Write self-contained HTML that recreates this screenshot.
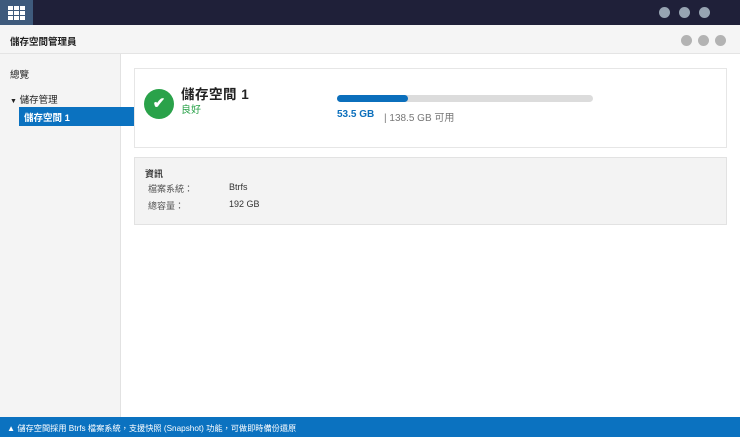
<!DOCTYPE html>
<html><head><meta charset="utf-8"><style>
*{margin:0;padding:0;box-sizing:border-box}
body{width:740px;height:437px;overflow:hidden;position:relative;background:#fff;font-family:"Liberation Sans","Noto Sans CJK TC",sans-serif;color:#222}
.top{position:absolute;left:0;top:0;width:740px;height:25px;background:#1f2039}
.apps{position:absolute;left:0;top:0;width:33px;height:25px;background:#3e5a7c}
.apps i{position:absolute;width:5px;height:4px;background:#fff}
.dot{position:absolute;width:11px;height:11px;border-radius:50%}
.hdr{position:absolute;left:0;top:25px;width:740px;height:29px;background:#f5f5f5;border-bottom:1px solid #e4e4e4;font-size:9.5px;font-weight:bold;padding:9px 0 0 10px}
.side{position:absolute;left:0;top:54px;width:121px;height:363px;background:#f4f4f4;border-right:1px solid #e2e2e2;font-size:9.5px}
.main{position:absolute;left:122px;top:54px;width:618px;height:363px;background:#fff}
.card{position:absolute;left:134px;top:68px;width:593px;height:80px;border:1px solid #e6e6e6;background:#fff}
.info{position:absolute;left:134px;top:157px;width:593px;height:68px;border:1px solid #e2e2e2;background:#f3f3f3;font-size:9px;color:#555}
.foot{position:absolute;left:0;top:417px;width:740px;height:20px;background:#0b72c0;color:#fff;font-size:8.2px;padding:5px 0 0 7px}
</style></head><body>
<div class="top"><div class="apps">
<i style="left:8px;top:6px"></i><i style="left:14px;top:6px"></i><i style="left:20px;top:6px"></i>
<i style="left:8px;top:11px"></i><i style="left:14px;top:11px"></i><i style="left:20px;top:11px"></i>
<i style="left:8px;top:16px"></i><i style="left:14px;top:16px"></i><i style="left:20px;top:16px"></i>
</div>
<div class="dot" style="left:659px;top:7px;background:#97a4b2"></div>
<div class="dot" style="left:679px;top:7px;background:#97a4b2"></div>
<div class="dot" style="left:699px;top:7px;background:#97a4b2"></div>
</div>
<div class="hdr">儲存空間管理員
<div class="dot" style="left:681px;top:10px;background:#b3b3b3"></div>
<div class="dot" style="left:698px;top:10px;background:#b3b3b3"></div>
<div class="dot" style="left:715px;top:10px;background:#b3b3b3"></div>
</div>
<div class="side">
<div style="position:absolute;left:10px;top:13px">總覽</div>
<div style="position:absolute;left:10px;top:38px"><span style="font-size:7px">▼</span> 儲存管理</div>
<div style="position:absolute;left:19px;top:53px;width:115px;height:19px;background:#0b72c0;color:#fff;padding:3px 0 0 5px;font-weight:bold;z-index:3">儲存空間 1</div>
</div>
<div class="main"></div>
<div class="card">
<div style="position:absolute;left:9px;top:20px;width:30px;height:30px;border-radius:50%;background:#2aa24a;color:#fff;font-size:15px;text-align:center;line-height:30px;font-weight:bold">✔</div>
<div style="position:absolute;left:46px;top:14px;font-size:13.5px;font-weight:bold;letter-spacing:0.5px">儲存空間 1</div>
<div style="position:absolute;left:46px;top:32px;font-size:10px;color:#2aa24a">良好</div>
<div style="position:absolute;left:202px;top:26px;width:256px;height:7px;border-radius:4px;background:#dcdcdc"><div style="width:71px;height:7px;border-radius:4px;background:#0b6fbc"></div></div>
<div style="position:absolute;left:202px;top:40px;font-size:10px;color:#0b6fbc;font-weight:bold">53.5 GB</div>
<div style="position:absolute;left:249px;top:40px;font-size:10px;color:#777">| 138.5 GB 可用</div>
</div>
<div class="info">
<div style="position:absolute;left:10px;top:9px;font-weight:bold;color:#333">資訊</div>
<div style="position:absolute;left:13px;top:24px">檔案系統：</div>
<div style="position:absolute;left:94px;top:24px;color:#333">Btrfs</div>
<div style="position:absolute;left:13px;top:41px">總容量：</div>
<div style="position:absolute;left:94px;top:41px;color:#333">192 GB</div>
</div>
<div class="foot">▲ 儲存空間採用 Btrfs 檔案系統，支援快照 (Snapshot) 功能，可做即時備份還原</div>
</body></html>
